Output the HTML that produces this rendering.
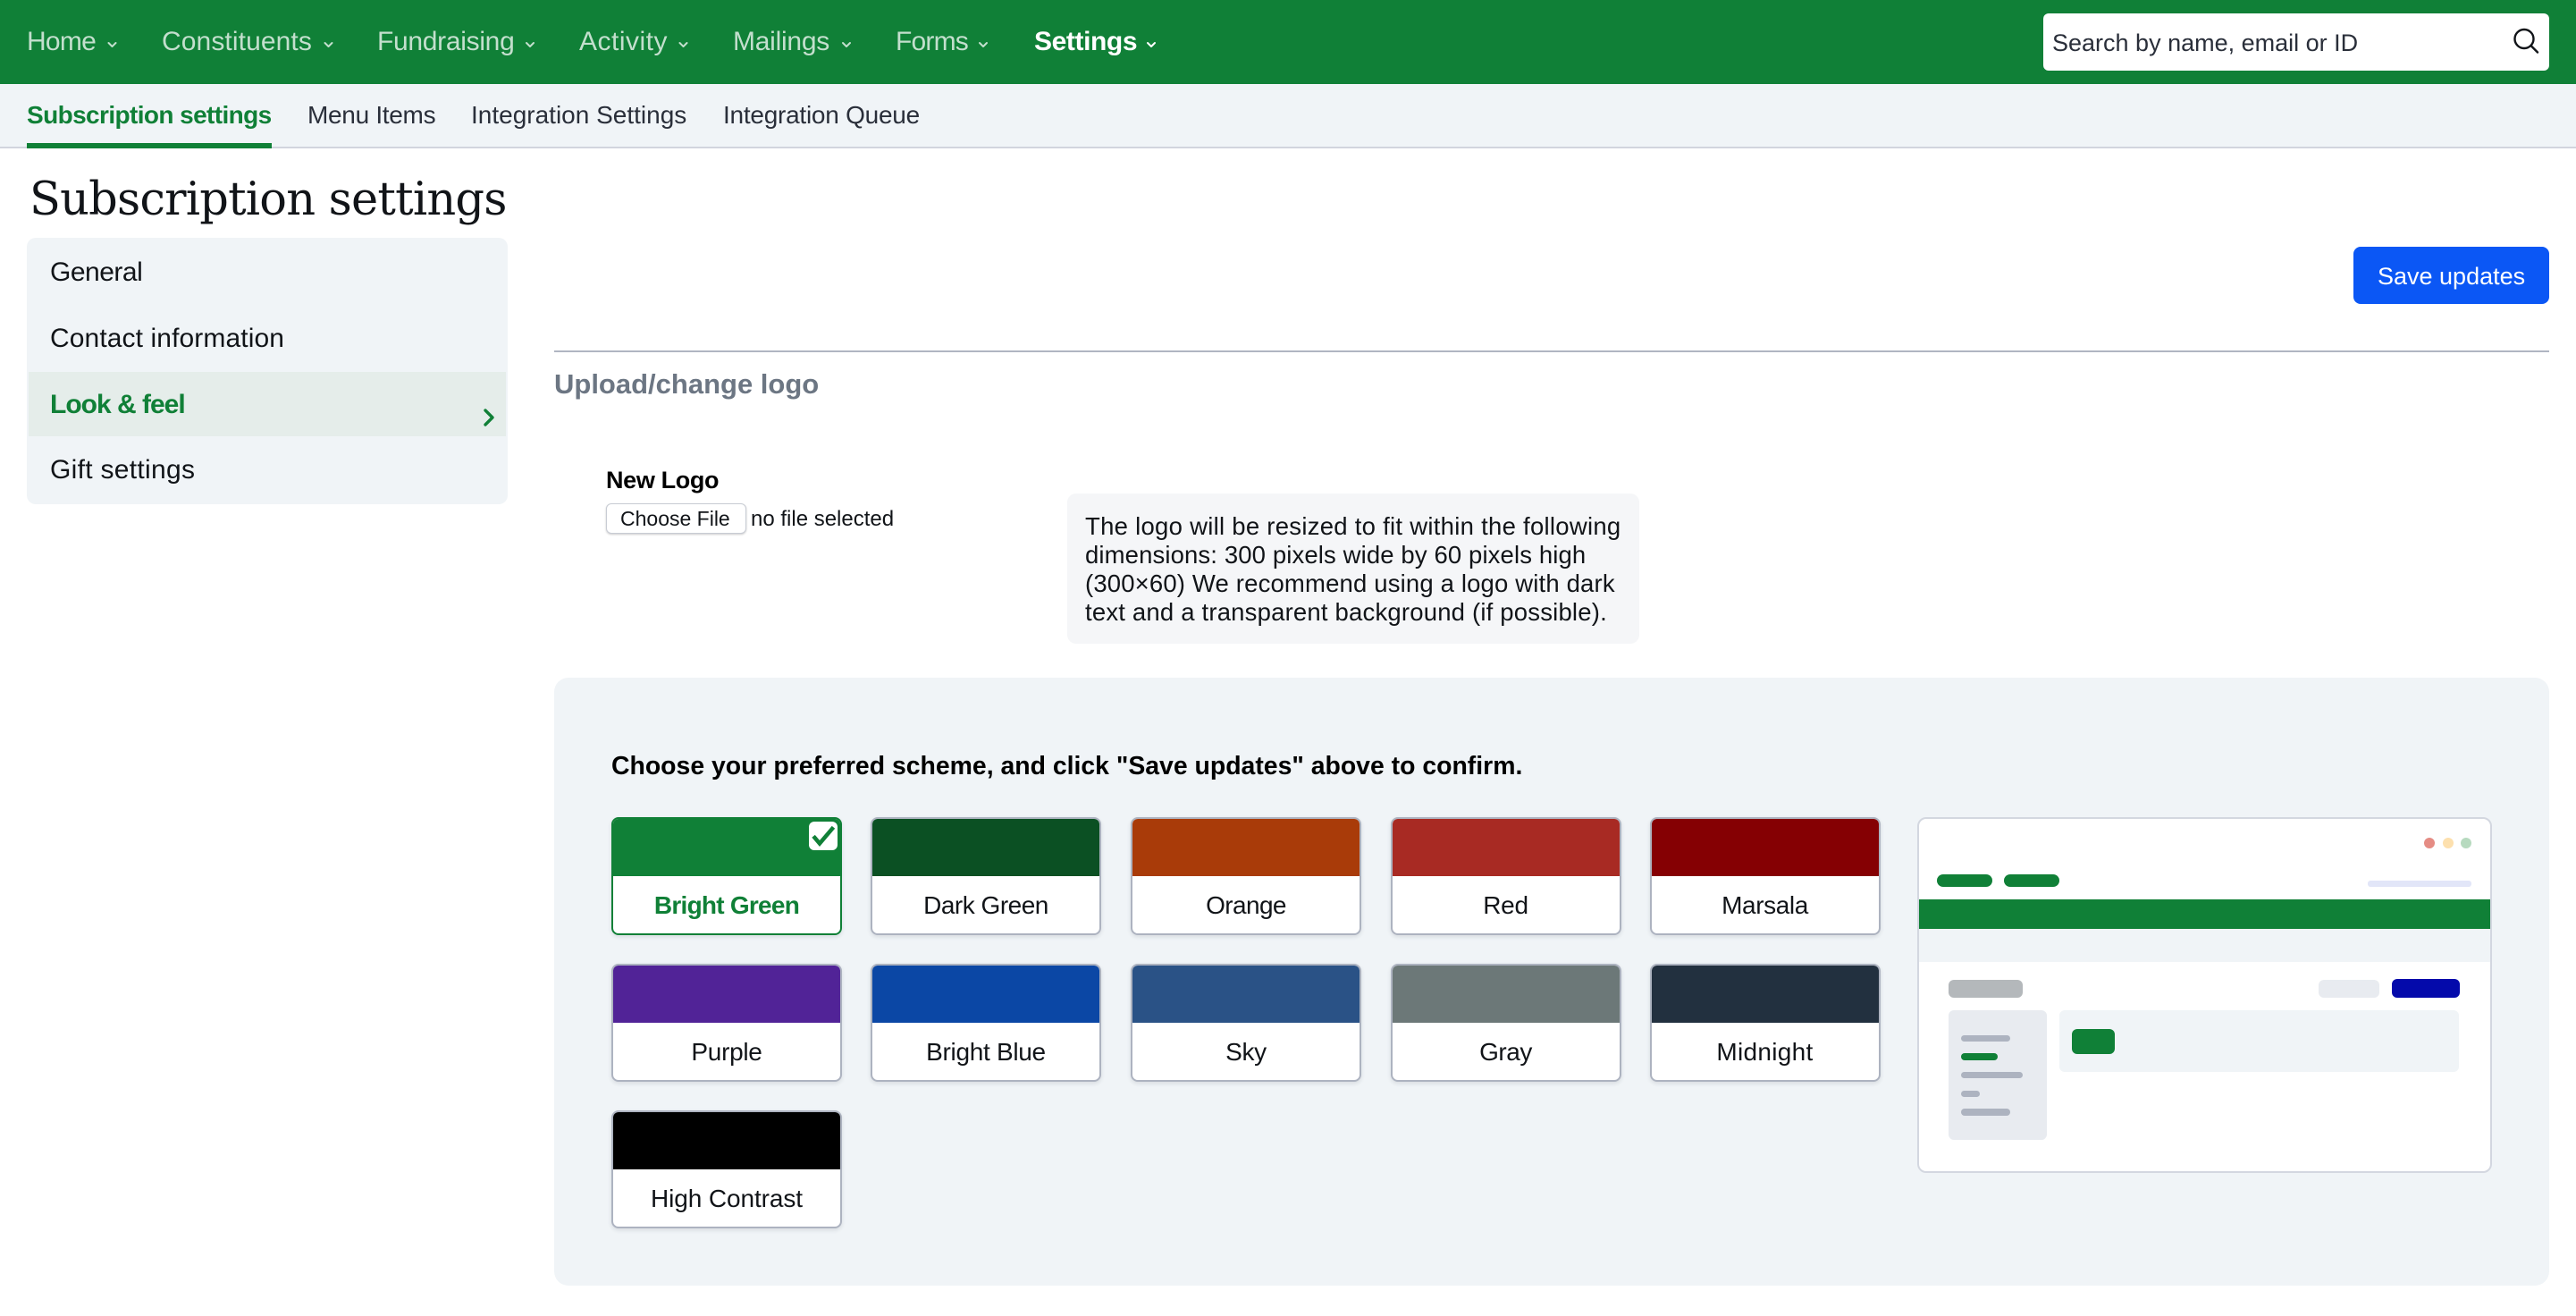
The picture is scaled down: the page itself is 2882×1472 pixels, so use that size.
<!DOCTYPE html>
<html lang="en">
<head>
<meta charset="utf-8">
<title>Subscription settings</title>
<style>
html,body{margin:0;padding:0;background:#fff}
body{width:2882px;height:1472px;position:relative;overflow:hidden;font-family:"Liberation Sans",Arial,sans-serif;color:#111418}
div,a,span,svg{position:absolute;display:block;box-sizing:border-box}
.t{white-space:nowrap;line-height:40px;height:40px}
.nav{font-size:30px;color:#c3dfcd;top:27px}
.sub{font-size:28px;color:#2a2f3a;top:110px}
.side{font-size:30px;color:#111418;left:56px}
.tip{left:1214px;font-size:27.5px;height:32px;line-height:32px;color:#111418}
.card{width:258px;height:132px;border:2px solid #adb3c0;border-radius:8px;background:#fff;box-shadow:0 2px 5px rgba(30,40,60,.12);overflow:hidden}
.card .c{left:0;top:0;right:0;height:64px}
.card .l{left:0;right:0;top:77px;height:40px;line-height:40px;text-align:center;font-size:28px;color:#111418;letter-spacing:-.3px}
.p{border-radius:6px}
</style>
</head>
<body>
<!-- header -->
<div style="left:0;top:0;width:2882px;height:94px;background:#108037"></div>
<a class="t nav" style="left:30px;letter-spacing:-.75px">Home</a>
<a class="t nav" style="left:181px;letter-spacing:.1px">Constituents</a>
<a class="t nav" style="left:422px;letter-spacing:-.3px">Fundraising</a>
<a class="t nav" style="left:648px;letter-spacing:.5px">Activity</a>
<a class="t nav" style="left:820px;letter-spacing:-.25px">Mailings</a>
<a class="t nav" style="left:1002px;letter-spacing:-.8px">Forms</a>
<a class="t nav" style="left:1157px;font-weight:bold;color:#fff;letter-spacing:-.4px">Settings</a>
<svg style="left:0;top:0" width="1400" height="94" fill="none" stroke-width="2" stroke-linecap="round" stroke-linejoin="round">
<g stroke="#c3dfcd">
<path d="M121.500 48l4 4 4-4"/><path d="M363.500 48l4 4 4-4"/><path d="M589 48l4 4 4-4"/><path d="M760.500 48l4 4 4-4"/><path d="M943 48l4 4 4-4"/><path d="M1096 48l4 4 4-4"/>
</g>
<path d="M1284 48l4 4 4-4" stroke="#fff"/>
</svg>
<div style="left:2286px;top:15px;width:566px;height:64px;background:#fff;border-radius:6px"></div>
<div class="t" style="left:2296px;top:28px;font-size:27px;color:#2a2f3a">Search by name, email or ID</div>
<svg style="left:2801px;top:21px" width="55" height="50" fill="none" stroke="#111418" stroke-width="2.400" stroke-linecap="round"><circle cx="23" cy="22.500" r="10.500"/><path d="M30.500 30l7.500 7.500"/></svg>

<!-- subnav -->
<div style="left:0;top:94px;width:2882px;height:72px;background:#f0f4f7;border-bottom:2px solid #d2d5de"></div>
<div style="left:30px;top:160px;width:274px;height:6px;background:#108037"></div>
<a class="t sub" style="left:30px;font-weight:bold;color:#108037;letter-spacing:-.6px;top:109px">Subscription settings</a>
<a class="t sub" style="left:344px;letter-spacing:-.3px;top:109px">Menu Items</a>
<a class="t sub" style="left:527px;top:109px">Integration Settings</a>
<a class="t sub" style="left:809px;letter-spacing:-.25px;top:109px">Integration Queue</a>

<!-- title -->
<div style="left:33px;top:189px;height:70px;line-height:70px;font-family:'DejaVu Serif','Liberation Serif',serif;font-size:51px;letter-spacing:-.8px;color:#111418;white-space:nowrap">Subscription settings</div>

<!-- sidebar -->
<div style="left:30px;top:266px;width:538px;height:298px;background:#f0f4f7;border-radius:10px"></div>
<div style="left:32px;top:416px;width:534px;height:72px;background:#e5edea"></div>
<a class="t side" style="top:285px;letter-spacing:-.5px">General</a>
<a class="t side" style="top:359px;letter-spacing:.1px">Contact information</a>
<a class="t side" style="top:433px;color:#108037;font-weight:bold;letter-spacing:-1px">Look &amp; feel</a>
<a class="t side" style="top:506px;letter-spacing:.3px">Gift settings</a>
<svg style="left:536px;top:452px" width="24" height="30" fill="none" stroke="#108037" stroke-width="3.400" stroke-linecap="round" stroke-linejoin="round"><path d="M7 7l8 8-8 8"/></svg>

<!-- main top -->
<a style="left:2633px;top:276px;width:219px;height:64px;background:#0b57f5;border-radius:8px"></a>
<div class="t" style="left:2660px;top:289px;font-size:27px;color:#fff">Save updates</div>
<div style="left:620px;top:392px;width:2232px;height:2px;background:#b0b5c2"></div>
<div class="t" style="left:620px;top:410px;font-size:31px;font-weight:bold;color:#6c7683">Upload/change logo</div>
<div class="t" style="left:678px;top:517px;font-size:27px;font-weight:bold;color:#000;letter-spacing:-.35px">New Logo</div>
<div style="left:678px;top:563px;width:157px;height:34px;background:#fff;border:1px solid #c8ccd4;border-radius:6px;box-shadow:0 1px 2px rgba(0,0,0,.2)"></div>
<div class="t" style="left:694px;top:560px;font-size:23px;color:#111418">Choose File</div>
<div class="t" style="left:840px;top:561px;font-size:24px;color:#111418">no file selected</div>
<div style="left:1194px;top:552px;width:640px;height:168px;background:#f5f6f8;border-radius:10px"></div>
<div class="t tip" style="top:573px;letter-spacing:.27px">The logo will be resized to fit within the following</div>
<div class="t tip" style="top:605px;letter-spacing:.12px">dimensions: 300 pixels wide by 60 pixels high</div>
<div class="t tip" style="top:637px;letter-spacing:.16px">(300×60) We recommend using a logo with dark</div>
<div class="t tip" style="top:669px;letter-spacing:.19px">text and a transparent background (if possible).</div>

<!-- scheme panel -->
<div style="left:620px;top:758px;width:2232px;height:680px;background:#f0f4f7;border-radius:16px"></div>
<div class="t" style="left:684px;top:837px;font-size:28.4px;font-weight:bold;color:#000">Choose your preferred scheme, and click "Save updates" above to confirm.</div>

<div class="card" style="left:684px;top:914px;border-color:#108037"><div class="c" style="background:#108037"></div><div class="l" style="color:#108037;font-weight:bold;letter-spacing:-.75px">Bright Green</div></div>
<div style="left:905px;top:919px;width:32px;height:32px;background:#fff;border-radius:6px"></div>
<svg style="left:905px;top:919px" width="32" height="32" fill="none" stroke="#108037" stroke-width="4.500" stroke-linecap="square"><path d="M6.500 18l5.500 6.500 14-16.500"/></svg>
<div class="card" style="left:974px;top:914px"><div class="c" style="background:#0b5023"></div><div class="l" style="letter-spacing:-.5px">Dark Green</div></div>
<div class="card" style="left:1265px;top:914px"><div class="c" style="background:#a93b09"></div><div class="l" style="letter-spacing:-.6px">Orange</div></div>
<div class="card" style="left:1555.500px;top:914px"><div class="c" style="background:#a82a23"></div><div class="l">Red</div></div>
<div class="card" style="left:1845.500px;top:914px"><div class="c" style="background:#850003"></div><div class="l" style="letter-spacing:-.4px">Marsala</div></div>

<div class="card" style="left:684px;top:1078px"><div class="c" style="background:#512397"></div><div class="l">Purple</div></div>
<div class="card" style="left:974px;top:1078px"><div class="c" style="background:#0b47a5"></div><div class="l">Bright Blue</div></div>
<div class="card" style="left:1265px;top:1078px"><div class="c" style="background:#2a5286"></div><div class="l">Sky</div></div>
<div class="card" style="left:1555.500px;top:1078px"><div class="c" style="background:#6c7878"></div><div class="l" style="letter-spacing:-.5px">Gray</div></div>
<div class="card" style="left:1845.500px;top:1078px"><div class="c" style="background:#22303f"></div><div class="l" style="letter-spacing:.3px">Midnight</div></div>

<div class="card" style="left:684px;top:1242px"><div class="c" style="background:#000"></div><div class="l" style="letter-spacing:-.1px">High Contrast</div></div>

<!-- preview -->
<div style="left:2145px;top:914px;width:643px;height:398px;background:#fff;border:2px solid #d3d7e0;border-radius:10px"></div>
<div style="left:2712px;top:937px;width:12px;height:12px;border-radius:50%;background:#e58c84"></div>
<div style="left:2733px;top:937px;width:12px;height:12px;border-radius:50%;background:#fde0ae"></div>
<div style="left:2753px;top:937px;width:12px;height:12px;border-radius:50%;background:#b7dabf"></div>
<div style="left:2167px;top:978px;width:62px;height:14px;border-radius:7px;background:#108037"></div>
<div style="left:2242px;top:978px;width:62px;height:14px;border-radius:7px;background:#108037"></div>
<div style="left:2649px;top:985px;width:116px;height:7px;border-radius:3px;background:#e2e6f8"></div>
<div style="left:2147px;top:1006px;width:639px;height:33px;background:#108037"></div>
<div style="left:2147px;top:1039px;width:639px;height:37px;background:#f0f4f7"></div>
<div class="p" style="left:2180px;top:1096px;width:83px;height:20px;background:#b4b8bb"></div>
<div class="p" style="left:2594px;top:1096px;width:68px;height:20px;background:#e8ebf0"></div>
<div class="p" style="left:2676px;top:1095px;width:76px;height:21px;background:#040aab"></div>
<div class="p" style="left:2180px;top:1130px;width:110px;height:145px;background:#e8ebf0"></div>
<div style="left:2194px;top:1158px;width:55px;height:7px;border-radius:4px;background:#adb3c0"></div>
<div style="left:2194px;top:1178px;width:41px;height:8px;border-radius:4px;background:#108037"></div>
<div style="left:2194px;top:1199px;width:69px;height:7px;border-radius:4px;background:#adb3c0"></div>
<div style="left:2194px;top:1220px;width:21px;height:7px;border-radius:4px;background:#adb3c0"></div>
<div style="left:2194px;top:1240px;width:55px;height:8px;border-radius:4px;background:#adb3c0"></div>
<div class="p" style="left:2304px;top:1130px;width:447px;height:69px;background:#f0f4f7"></div>
<div class="p" style="left:2318px;top:1151px;width:48px;height:28px;background:#108037"></div>
</body>
</html>
